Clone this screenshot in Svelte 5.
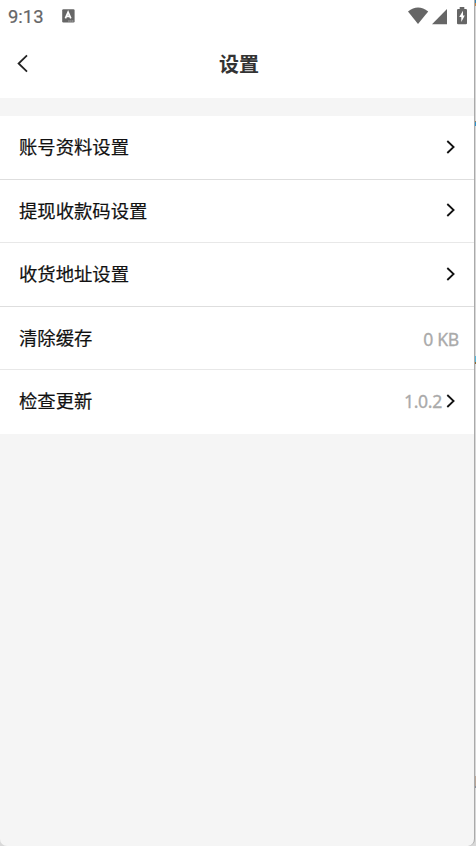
<script>
  const items = [
    { label: '账号资料设置', value: '', arrow: true },
    { label: '提现收款码设置', value: '', arrow: true },
    { label: '收货地址设置', value: '', arrow: true },
    { label: '清除缓存', value: '0 KB', arrow: false },
    { label: '检查更新', value: '1.0.2', arrow: true },
  ];
</script>

<div class="window">
  <main class="screen">
    <div class="status">
      <span class="time">9:13</span>
      <svg class="app-icon" width="14" height="14" viewBox="0 0 14 14">
        <rect x="0.2" y="0.2" width="12.4" height="13.2" rx="1.2" fill="#666" />
        <path d="M3.4 9.4L6.1 3.2L8.8 9.4M4.5 7.4H7.7" fill="none" stroke="#fff" stroke-width="1.7" />
        <path d="M6.3 12H11.6" stroke="#bbb" stroke-width="1" stroke-dasharray="1.3 0.6" />
      </svg>
      <svg class="signals" width="62" height="20" viewBox="0 0 62 20">
        <path d="M0 3.4Q10 -4.3 20.2 3.4L10 16Z" fill="#666" />
        <path d="M39 1.1V16.3H24Z" fill="#666" />
        <path d="M51.7 -0.9H56.3V1H57.9Q59 1 59 2.1V15.2Q59 16.3 57.9 16.3H50.1Q49 16.3 49 15.2V2.1Q49 1 50.1 1H51.7Z" fill="#666" />
        <path d="M55 2.8L51.2 9H53.3V14L56.8 7.4H55Z" fill="#fff" />
      </svg>
    </div>

    <header class="nav">
      <svg class="back" width="14" height="20" viewBox="0 0 14 20">
        <path d="M11 1.3L2.6 9.5L11 17.7" fill="none" stroke="#222" stroke-width="1.8" />
      </svg>
      <h1>设置</h1>
    </header>

    <div class="list">
      {#each items as item}
        <div class="row">
          <span class="label">{item.label}</span>
          <span class="value">{item.value}</span>
          {#if item.arrow}
            <svg class="arrow" width="10" height="14" viewBox="0 0 10 14">
              <path d="M1.3 1L7.6 7L1.3 13" fill="none" stroke="#111" stroke-width="1.8" />
            </svg>
          {/if}
        </div>
      {/each}
    </div>
  </main>
</div>

<style>
  :global(body) { margin: 0; overflow: hidden; }
  .window {
    display: flex;
    width: 476px;
    height: 846px;
    background: linear-gradient(#3584b0 0 3px, #c88b4b 3px 6px, #d8d8d8 6px 121px, #9a7b55 121px 122px, #2c94cf 122px 126px, #d8d8d8 126px 356px, #54b8dc 356px 362px, #8a6a35 362px 364px, #d8d8d8 364px 776px, #b9a79a 776px 786px, #8b909a 786px 788px, #d8d8d8 788px);
    font-family: Roboto, "Noto Sans CJK SC", sans-serif;
  }
  .screen { box-sizing: border-box; width: 475px; height: 846px; background: #f5f5f5; border-right: 1px solid #aaa; border-radius: 0 0 7px 7px; overflow: hidden; }
  .status { display: flex; height: 32px; background: #fff; }
  .time { width: 54px; padding-left: 8px; font-size: 18.4px; line-height: 34px; color: #666; -webkit-text-stroke: 0.2px #666; }
  .app-icon { margin-top: 9px; }
  .signals { margin: 8px 4px 0 auto; overflow: visible; }
  .nav { display: flex; align-items: center; height: 66px; background: #fff; }
  .back { margin: 0 0 3px 16px; }
  h1 { flex: 1; margin: 0 27px 1px 0; padding-left: 1px; text-align: center; font-size: 20px; line-height: 30px; font-weight: 700; color: #333; }
  .list { margin-top: 18px; }
  .row { display: flex; align-items: center; box-sizing: border-box; height: 64px; padding: 0 15px 0 19px; background: #fff; border-bottom: 1px solid #dedede; }
  .row:nth-child(even) { height: 63px; border-color: #e8e8e8; }
  .row:last-child { border-color: #fff; }
  .label { flex: 1; font-size: 18.35px; line-height: 28px; color: #111; -webkit-text-stroke: 0.2px #111; }
  .row:nth-child(even) .label { padding-top: 1px; }
  .value { padding-top: 1px; font-family: "Noto Sans", sans-serif; font-size: 17.6px; letter-spacing: -0.3px; line-height: 26px; color: #aaa; -webkit-text-stroke: 0.3px #aaa; }
  .row:last-child .value { padding: 0 0 2px; }
  .arrow { margin: 0 3px 2px 4px; }
</style>
